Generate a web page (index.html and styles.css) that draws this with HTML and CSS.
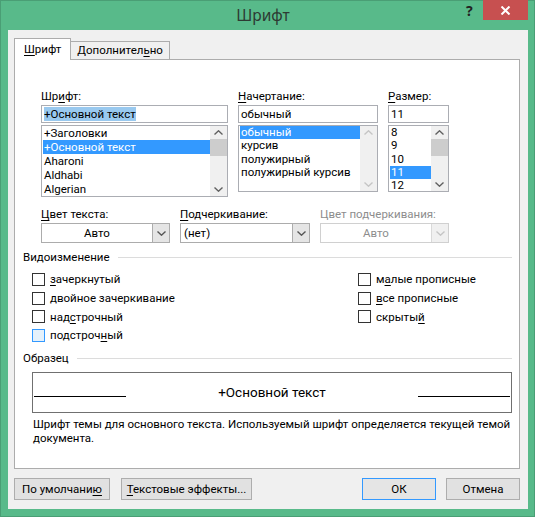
FILE: index.html
```html
<!DOCTYPE html>
<html lang="ru">
  <head>
    <meta charset="UTF-8" />
    <meta name="viewport" content="width=device-width, initial-scale=1.0" />
    <title>Шрифт</title>
    <link rel="stylesheet" href="styles.css">
  </head>
  <body>
    <div class="window">
      <div class="titlebar">
        <span class="title">Шрифт</span>
        <span class="help">?</span>
        <span class="close">
          <svg width="11" height="9" viewBox="0 0 11 9"><path d="M1.5 0.5 L9.5 8.5 M9.5 0.5 L1.5 8.5" stroke="#fff" stroke-width="2" /></svg>
        </span>
      </div>

      <div class="client">
        <div class="tabs">
          <div class="tab active"><u>Ш</u>рифт</div>
          <div class="tab">Дополнител<u>ь</u>но</div>
        </div>

        <div class="panel">
          <!-- шрифт / начертание / размер -->
          <div class="fontGrid">
            <div class="col">
              <div class="label">Шр<u>и</u>фт:</div>
              <div class="field"><span class="sel">+Основной текст</span></div>
              <div class="list fontList">
                <div class="rows">
                  <div class="row">+Заголовки</div>
                  <div class="row picked">+Основной текст</div>
                  <div class="row">Aharoni</div>
                  <div class="row">Aldhabi</div>
                  <div class="row">Algerian</div>
                </div>
                <div class="scroll">
                  <svg class="arr" width="9" height="5" viewBox="0 0 9 5"><path d="M0.5 4.5 L4.5 0.8 L8.5 4.5" /></svg>
                  <div class="track"><div class="thumb"></div></div>
                  <svg class="arr" width="9" height="5" viewBox="0 0 9 5"><path d="M0.5 0.5 L4.5 4.2 L8.5 0.5" /></svg>
                </div>
              </div>
            </div>

            <div class="col">
              <div class="label"><u>Н</u>ачертание:</div>
              <div class="field">обычный</div>
              <div class="list styleList">
                <div class="rows">
                  <div class="row picked">обычный</div>
                  <div class="row">курсив</div>
                  <div class="row">полужирный</div>
                  <div class="row">полужирный курсив</div>
                </div>
                <div class="scroll off">
                  <svg class="arr" width="9" height="5" viewBox="0 0 9 5"><path d="M0.5 4.5 L4.5 0.8 L8.5 4.5" /></svg>
                  <div class="track"></div>
                  <svg class="arr" width="9" height="5" viewBox="0 0 9 5"><path d="M0.5 0.5 L4.5 4.2 L8.5 0.5" /></svg>
                </div>
              </div>
            </div>

            <div class="col">
              <div class="label"><u>Р</u>азмер:</div>
              <div class="field">11</div>
              <div class="list sizeList">
                <div class="rows">
                  <div class="row">8</div>
                  <div class="row">9</div>
                  <div class="row">10</div>
                  <div class="row picked">11</div>
                  <div class="row">12</div>
                </div>
                <div class="scroll">
                  <svg class="arr" width="9" height="5" viewBox="0 0 9 5"><path d="M0.5 4.5 L4.5 0.8 L8.5 4.5" /></svg>
                  <div class="track"><div class="thumb"></div></div>
                  <svg class="arr" width="9" height="5" viewBox="0 0 9 5"><path d="M0.5 0.5 L4.5 4.2 L8.5 0.5" /></svg>
                </div>
              </div>
            </div>
          </div>

          <!-- цвет / подчеркивание -->
          <div class="comboGrid">
            <div class="col">
              <div class="label"><u>Ц</u>вет текста:</div>
              <div class="combo center">
                <span class="value">Авто</span>
                <span class="drop"><svg width="9" height="5" viewBox="0 0 9 5"><path d="M0.5 0.5 L4.5 4.2 L8.5 0.5" /></svg></span>
              </div>
            </div>
            <div class="col">
              <div class="label"><u>П</u>одчеркивание:</div>
              <div class="combo">
                <span class="value">(нет)</span>
                <span class="drop"><svg width="9" height="5" viewBox="0 0 9 5"><path d="M0.5 0.5 L4.5 4.2 L8.5 0.5" /></svg></span>
              </div>
            </div>
            <div class="col disabled">
              <div class="label">Цвет подчеркивания:</div>
              <div class="combo center">
                <span class="value">Авто</span>
                <span class="drop"><svg width="9" height="5" viewBox="0 0 9 5"><path d="M0.5 0.5 L4.5 4.2 L8.5 0.5" /></svg></span>
              </div>
            </div>
          </div>

          <div class="group">Видоизменение</div>
          <div class="effects">
            <div class="checks">
              <label class="check"><span class="box"></span><span><u>з</u>ачеркнутый</span></label>
              <label class="check"><span class="box"></span><span>двойное зачеркивание</span></label>
              <label class="check"><span class="box"></span><span>над<u>с</u>трочный</span></label>
              <label class="check"><span class="box hot"></span><span>подстроч<u>н</u>ый</span></label>
            </div>
            <div class="checks">
              <label class="check"><span class="box"></span><span>м<u>а</u>лые прописные</span></label>
              <label class="check"><span class="box"></span><span><u>в</u>се прописные</span></label>
              <label class="check"><span class="box"></span><span>скрыты<u>й</u></span></label>
            </div>
          </div>

          <div class="group">Образец</div>
          <div class="sample">
            <span class="rule"></span>
            <span class="preview">+Основной текст</span>
            <span class="rule"></span>
          </div>
          <p class="note">Шрифт темы для основного текста. Используемый шрифт определяется текущей темой документа.</p>
        </div>

        <div class="buttons">
          <div class="btn wide1">По умолчани<u>ю</u></div>
          <div class="btn wide2"><u>Т</u>екстовые эффекты...</div>
          <div class="spacer"></div>
          <div class="btn ok">ОК</div>
          <div class="btn">Отмена</div>
        </div>
      </div>
    </div>
  </body>
</html>
```

FILE: styles.css
```css
* {
  box-sizing: border-box;
}
body {
  margin: 0;
  font-family: Roboto, "Noto Sans", sans-serif;
  font-size: 11.5px;
  color: #000;
}
u {
  text-decoration-thickness: 1px;
  text-underline-offset: 2px;
}
.window {
  width: 535px;
  height: 517px;
  background: #58ba8a;
  border: 1px solid #4a9e75;
  padding: 0 6px 7px 7px;
  display: flex;
  flex-direction: column;
}
.titlebar {
  height: 29px;
  display: flex;
  align-items: flex-start;
}
.title {
  flex: 1;
  text-align: center;
  font-family: "Noto Sans", sans-serif;
  font-size: 15.5px;
  line-height: 29px;
  color: #2d3a33;
  padding-left: 52px;
}
.help {
  font-family: "Noto Sans", sans-serif;
  font-weight: bold;
  font-size: 14px;
  line-height: 20px;
  color: #222;
  width: 16px;
  margin-right: 1px;
}
.close {
  width: 45px;
  height: 20px;
  margin-top: -1px;
  background: #c75050;
  display: flex;
  align-items: center;
  justify-content: center;
}
.close svg {
  display: block;
}
.client {
  flex: 1;
  background: #f0f0f0;
  padding: 8px 8px 8px 6px;
  display: flex;
  flex-direction: column;
}

/* вкладки */
.tabs {
  display: flex;
  align-items: flex-end;
  height: 21px;
  padding-left: 1px;
}
.tab {
  height: 18px;
  padding: 0 6px;
  line-height: 17px;
  border: 1px solid #acacac;
  border-bottom: none;
  background: #f0f0f0;
  margin-left: -1px;
}
.tab.active {
  height: 22px;
  line-height: 20px;
  padding: 0 9px;
  background: #fff;
  margin-bottom: -1px;
  position: relative;
  z-index: 1;
}
.panel {
  height: 410px;
  background: #fff;
  border: 1px solid #acacac;
  padding: 29px 7px 0 8px;
}

/* списки */
.fontGrid {
  display: grid;
  grid-template-columns: 187px 140px 61px;
  column-gap: 10px;
  padding-left: 18px;
  align-items: start;
}
.label {
  height: 16px;
  line-height: 15px;
  white-space: nowrap;
}
.field {
  height: 18px;
  border: 1px solid #abadb3;
  padding: 0 2px;
  line-height: 16px;
  white-space: nowrap;
}
.sel {
  background: #99c9ef;
}
.list {
  margin-top: 2px;
  border: 1px solid #abadb3;
  display: flex;
  height: 67px;
}
.fontList {
  height: 72px;
}
.rows {
  flex: 1;
  padding-left: 1px;
  overflow: hidden;
}
.row {
  line-height: 13.3px;
  height: 13.3px;
  padding-left: 1px;
  white-space: nowrap;
}
.fontList .row {
  line-height: 14px;
  height: 14px;
}
.row.picked {
  background: #3399ff;
  color: #fff;
}
.scroll {
  width: 17px;
  background: #f0f0f0;
  display: flex;
  flex-direction: column;
  align-items: center;
}
.arr {
  display: block;
  margin: 4px 0;
  fill: none;
  stroke: #606060;
  stroke-width: 1.4;
}
.track {
  flex: 1;
  width: 100%;
}
.thumb {
  height: 17px;
  background: #cdcdcd;
}
.scroll.off .arr {
  stroke: #c5c5c5;
}

/* комбо */
.comboGrid {
  display: grid;
  grid-template-columns: 129px 130px 129px;
  column-gap: 10px;
  padding-left: 18px;
  margin-top: 10px;
}
.combo {
  height: 20px;
  border: 1px solid #acacac;
  display: flex;
  align-items: stretch;
}
.combo .value {
  flex: 1;
  line-height: 18px;
  padding-left: 3px;
}
.combo.center .value {
  text-align: center;
  padding-left: 0;
}
.drop {
  width: 17px;
  border-left: 1px solid #acacac;
  background: #e5e5e5;
  display: flex;
  align-items: center;
  justify-content: center;
}
.drop svg {
  fill: none;
  stroke: #555;
  stroke-width: 1.4;
}
.disabled {
  color: #8d8d8d;
}
.disabled .combo {
  border-color: #d0d0d0;
}
.disabled .drop {
  border-left-color: #d9d9d9;
  background: #f0f0f0;
}
.disabled .drop svg {
  stroke: #c5c5c5;
}

/* группы */
.group {
  display: flex;
  align-items: center;
  gap: 8px;
  margin-top: 7px;
  height: 15px;
  line-height: 15px;
}
.group::after {
  content: "";
  flex: 1;
  height: 1px;
  background: #dcdcdc;
}
.effects {
  display: grid;
  grid-template-columns: 326px auto;
  padding: 5px 0 0 9px;
}
.check {
  display: flex;
  align-items: center;
  height: 18.7px;
  gap: 5px;
  white-space: nowrap;
}
.box {
  width: 13px;
  height: 13px;
  border: 1px solid #333;
  background: #fff;
}
.box.hot {
  border-color: #3399ff;
  background: #e5f1fb;
}
.effects + .group {
  margin-top: 6px;
}
.sample {
  margin: 6px 0 0 9px;
  height: 41px;
  border: 1px solid #707070;
  display: flex;
  align-items: center;
  padding: 0 1px;
}
.rule {
  width: 92px;
  height: 1px;
  background: #000;
  margin-top: 8px;
}
.preview {
  flex: 1;
  text-align: center;
  font-size: 13.5px;
  line-height: 18px;
}
.note {
  margin: 4px 0 0 10px;
  line-height: 14px;
}

/* кнопки */
.buttons {
  display: flex;
  gap: 10px;
  margin-top: 9px;
}
.btn {
  width: 74px;
  height: 22px;
  border: 1px solid #adadad;
  background: #e1e1e1;
  text-align: center;
  line-height: 20px;
  white-space: nowrap;
}
.btn.wide1 {
  width: 96px;
}
.btn.wide2 {
  width: 131px;
  margin-left: 1px;
}
.btn.ok {
  border-color: #3399ff;
  background: #e5e5e5;
}
.spacer {
  flex: 1;
}
```
